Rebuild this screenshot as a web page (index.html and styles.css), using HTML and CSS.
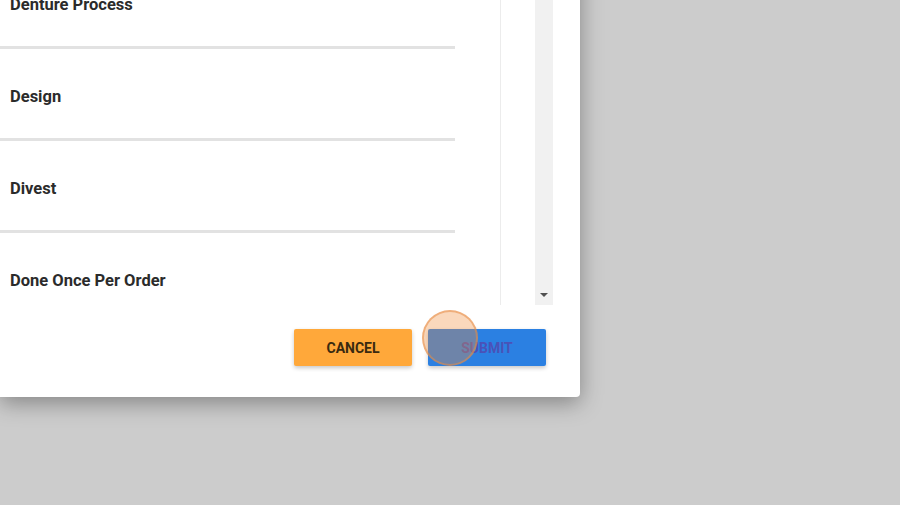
FILE: index.html
```html
<!DOCTYPE html>
<html>
  <head>
    <meta charset="utf-8">
    <title>Select Process</title>
    <link rel="stylesheet" href="styles.css">
  </head>
  <body>
    <div class="dialog">
      <div class="list-wrap">
        <div class="items">
          <div class="item">Denture Process</div>
          <div class="item">Design</div>
          <div class="item">Divest</div>
          <div class="item">Done Once Per Order</div>
        </div>
        <div class="gutter"></div>
        <div class="scrollbar">
          <span class="arrow"></span>
        </div>
      </div>
      <div class="actions">
        <button class="btn cancel">Cancel</button>
        <button class="btn submit">Submit
          <span class="click"></span>
        </button>
      </div>
    </div>
  </body>
</html>
```

FILE: styles.css
```css
body, html {
  margin: 0;
  padding: 0;
  height: 100%;
  overflow: hidden;
  background-color: #cccccc;
  font-family: Roboto, "Liberation Sans", Arial, sans-serif;
}

.dialog {
  width: 580px;
  margin-top: -43px;
  background: #fff;
  border-radius: 0 0 4px 0;
  box-shadow: 0 6px 22px rgba(0, 0, 0, 0.35);
}

.list-wrap {
  display: flex;
  height: 348px;
  overflow: hidden;
}

.items {
  width: 455px;
}

.item {
  height: 84px;
  padding: 5px 0 0 10px;
  border-bottom: 3px solid #e2e2e2;
  display: flex;
  align-items: center;
  font-size: 16.5px;
  font-weight: 700;
  color: #2b2b2b;
}

.gutter {
  width: 45px;
  border-right: 1px solid #ececec;
}

.scrollbar {
  width: 18px;
  margin-left: 34px;
  background: #f1f1f1;
  display: flex;
  align-items: flex-end;
  justify-content: center;
  padding-bottom: 8px;
  box-sizing: border-box;
}

.arrow {
  width: 0;
  height: 0;
  border-left: 4px solid transparent;
  border-right: 4px solid transparent;
  border-top: 4px solid #505050;
}

.actions {
  display: flex;
  justify-content: flex-end;
  gap: 16px;
  padding: 24px 34px 31px 0;
}

.btn {
  position: relative;
  width: 118px;
  height: 37px;
  border: none;
  border-radius: 2px;
  font-family: Roboto, "Liberation Sans", Arial, sans-serif;
  font-size: 14px;
  font-weight: 700;
  text-transform: uppercase;
  box-shadow: 0 2px 4px rgba(0, 0, 0, 0.22);
}

.cancel {
  background: #ffa83a;
  color: #3a2a10;
}

.submit {
  background: #2b80e2;
  color: #4a52b8;
}

/* click marker from the recording */
.click {
  position: absolute;
  left: -6px;
  top: -19px;
  width: 52px;
  height: 52px;
  border-radius: 50%;
  background: rgba(240, 140, 60, 0.34);
  border: 2px solid rgba(230, 140, 70, 0.55);
}
```
